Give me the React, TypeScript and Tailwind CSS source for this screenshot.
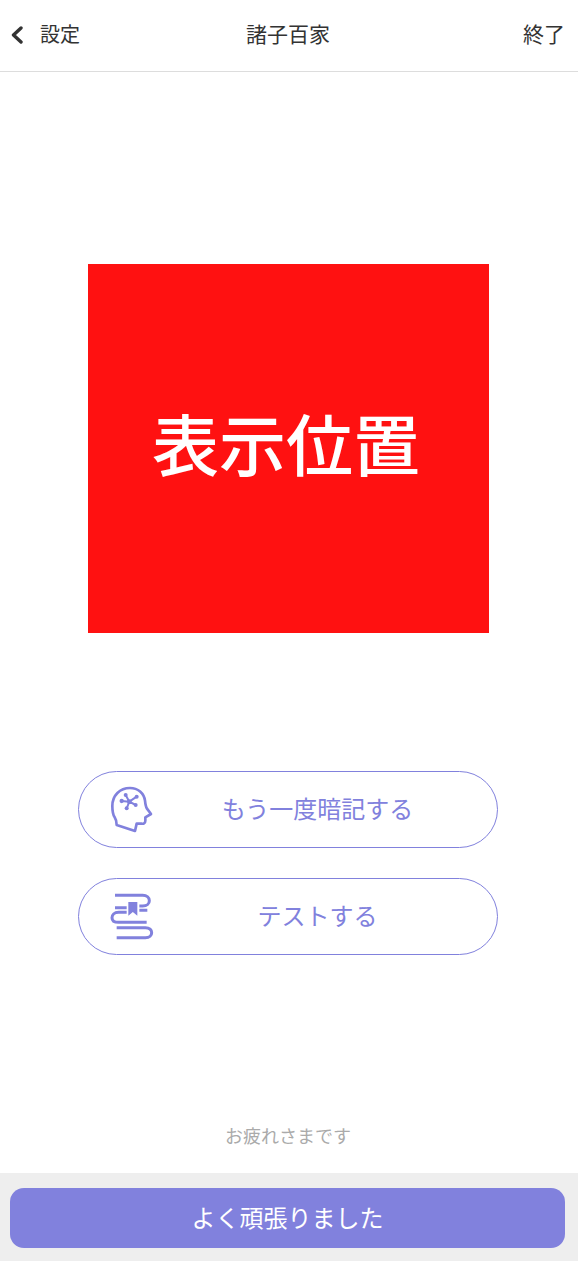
import { ReactNode } from "react";

const FONT = "font-['Inter','Noto_Sans_CJK_JP',sans-serif]";

function BrainIcon() {
  return (
    <svg width="60" height="60" viewBox="0 0 180 180" fill="none" stroke="#8181dd" strokeWidth="8" strokeLinecap="round" strokeLinejoin="round">
      <path d="M50 135 C50 125 48 118 44 112 C40 106 37 92 37 78 C37 46 60 24 90 24 C114 24 132 40 135 62 C136 72 137 80 141 86 L153 102 L136 112 L136 122 C136 130 130 132 124 131 L110 131 L105 153 Z" />
      <path d="M88 65 L65 63 M88 65 L77 45 M88 65 L110 50 M88 65 L107 75 M88 65 L80 85" strokeWidth="6" />
      <g fill="#8181dd" stroke="none">
        <circle cx="65" cy="63" r="6.5" />
        <circle cx="77" cy="45" r="6" />
        <circle cx="110" cy="50" r="6" />
        <circle cx="107" cy="75" r="6" />
        <circle cx="80" cy="85" r="6" />
        <circle cx="88" cy="65" r="7" />
      </g>
    </svg>
  );
}

function BooksIcon() {
  return (
    <svg width="60" height="60" viewBox="0 0 180 180" fill="none" stroke="#8181dd" strokeWidth="9">
      <path d="M45 25 H128 C141 25 148 32 148 41 C148 50 141 57 128 57 H118" />
      <path d="M45 62 H80 M118 70 H142" />
      <path d="M85 45 H112 V86 L98.5 75 L85 86 Z" fill="#8181dd" stroke="none" />
      <path d="M80 76 H56 C42 76 36 84 36 92 C36 100 42 106 56 106 H140" />
      <path d="M50 122 H136 C149 122 155 129 155 137 C155 145 149 152 136 152 H50" />
    </svg>
  );
}

function ActionButton({ icon, label }: { icon: ReactNode; label: string }) {
  return (
    <button className="relative flex h-[77px] w-[420px] items-center justify-center rounded-[39px] border border-[#8181dd] bg-white pl-[59px]">
      <span className="absolute left-[21px] top-[8px]">{icon}</span>
      <span className="text-[24px] text-[#8181dd]">{label}</span>
    </button>
  );
}

export default function App() {
  return (
    <div className={`${FONT} flex h-[1261px] w-[578px] flex-col bg-white`}>
      {/* header */}
      <header className="flex h-[72px] shrink-0 items-center justify-between border-b border-[#dddddd] pb-[2px] pl-[11px] pr-[13px] text-[21px] text-[#333333]">
        <div className="flex w-[120px] items-center gap-[17px]">
          <svg width="12" height="18" viewBox="0 0 12 18" fill="none" stroke="#333333" strokeWidth="3.4" strokeLinecap="round" strokeLinejoin="round">
            <path d="M10 2 L2.5 9 L10 16" />
          </svg>
          <span className="text-[20px]">設定</span>
        </div>
        <span>諸子百家</span>
        <span className="w-[120px] text-right">終了</span>
      </header>

      <main className="flex flex-1 flex-col items-start">
        <div className="ml-[88px] mt-[192px] flex h-[369px] w-[401px] items-center justify-center bg-[#ff1111] pb-[3px] pr-[5px] text-[67px] font-medium text-white">
          表示位置
        </div>

        <div className="ml-[78px] mt-[138px] flex flex-col gap-[30px]">
          <ActionButton icon={<BrainIcon />} label="もう一度暗記する" />
          <ActionButton icon={<BooksIcon />} label="テストする" />
        </div>

        <p className="ml-[225px] mt-[168px] text-[18px] text-[#aaaaaa]">お疲れさまです</p>
      </main>

      {/* footer */}
      <footer className="flex h-[88px] shrink-0 items-start bg-[#eeeeee] pl-[10px] pt-[15px]">
        <button className="h-[60px] w-[555px] rounded-[14px] bg-[#8181dd] pt-[1px] text-[24px] text-white">よく頑張りました</button>
      </footer>
    </div>
  );
}
